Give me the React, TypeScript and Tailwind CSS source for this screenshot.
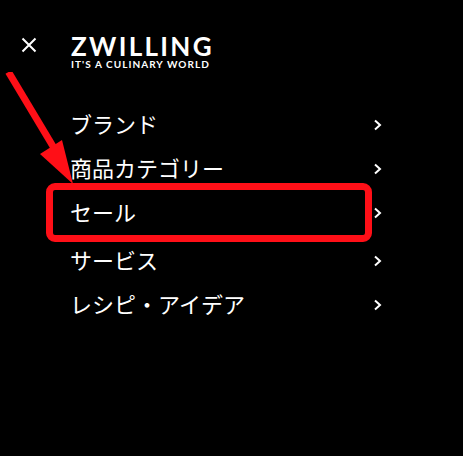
const items = [
  { label: "ブランド", cls: "h-11" },
  { label: "商品カテゴリー", cls: "h-11" },
  { label: "セール", cls: "h-11" },
  { label: "サービス", cls: "h-11 mt-1" },
  { label: "レシピ・アイデア", cls: "h-11" },
];

function Chevron() {
  return (
    <svg width="8" height="12" viewBox="0 0 8 12" fill="none" stroke="#fff" strokeWidth="2" className="shrink-0 mt-[4px]">
      <path d="M1 1.5l5 4.5-5 4.5" />
    </svg>
  );
}

export default function App() {
  return (
    <div className="relative w-[463px] h-[456px] overflow-hidden bg-black text-white font-['Noto_Sans_CJK_JP','Noto_Sans',sans-serif]">
      <div className="flex pt-[36px] pl-[21px]">
        <svg width="16" height="16" viewBox="0 0 16 16" fill="none" stroke="#fff" strokeWidth="2" className="mt-[1px] mr-[34px] shrink-0">
          <path d="M1.5 1.5l13 13M14.5 1.5l-13 13" />
        </svg>
        <div className="flex flex-col font-['Lato',sans-serif] w-[142px]">
          <span className="text-[26px] leading-[20px] font-bold tracking-[2.3px] whitespace-nowrap">ZWILLING</span>
          <span className="mt-[3px] text-[10px] leading-[10px] font-bold tracking-[1.05px] whitespace-nowrap">IT'S A CULINARY WORLD</span>
        </div>
      </div>
      <nav className="flex flex-col mt-[32px] pl-[70px] w-[382px]">
        {items.map((it) => (
          <div key={it.label} className={`flex items-center justify-between ${it.cls}`}>
            <span className="text-[22px] leading-none whitespace-nowrap">{it.label}</span>
            <Chevron />
          </div>
        ))}
      </nav>
      <div className="absolute left-[46px] top-[183px] w-[326px] h-[59px] border-[7px] border-[#ff0f17] rounded-[9px]" />
      <svg width="80" height="115" viewBox="0 0 80 115" className="absolute left-0 top-[72px]">
        <path d="M8.5 0L54 76" stroke="#ff0f17" strokeWidth="7" fill="none" />
        <path d="M73 112L40 82L62 68Z" fill="#ff0f17" />
      </svg>
    </div>
  );
}
